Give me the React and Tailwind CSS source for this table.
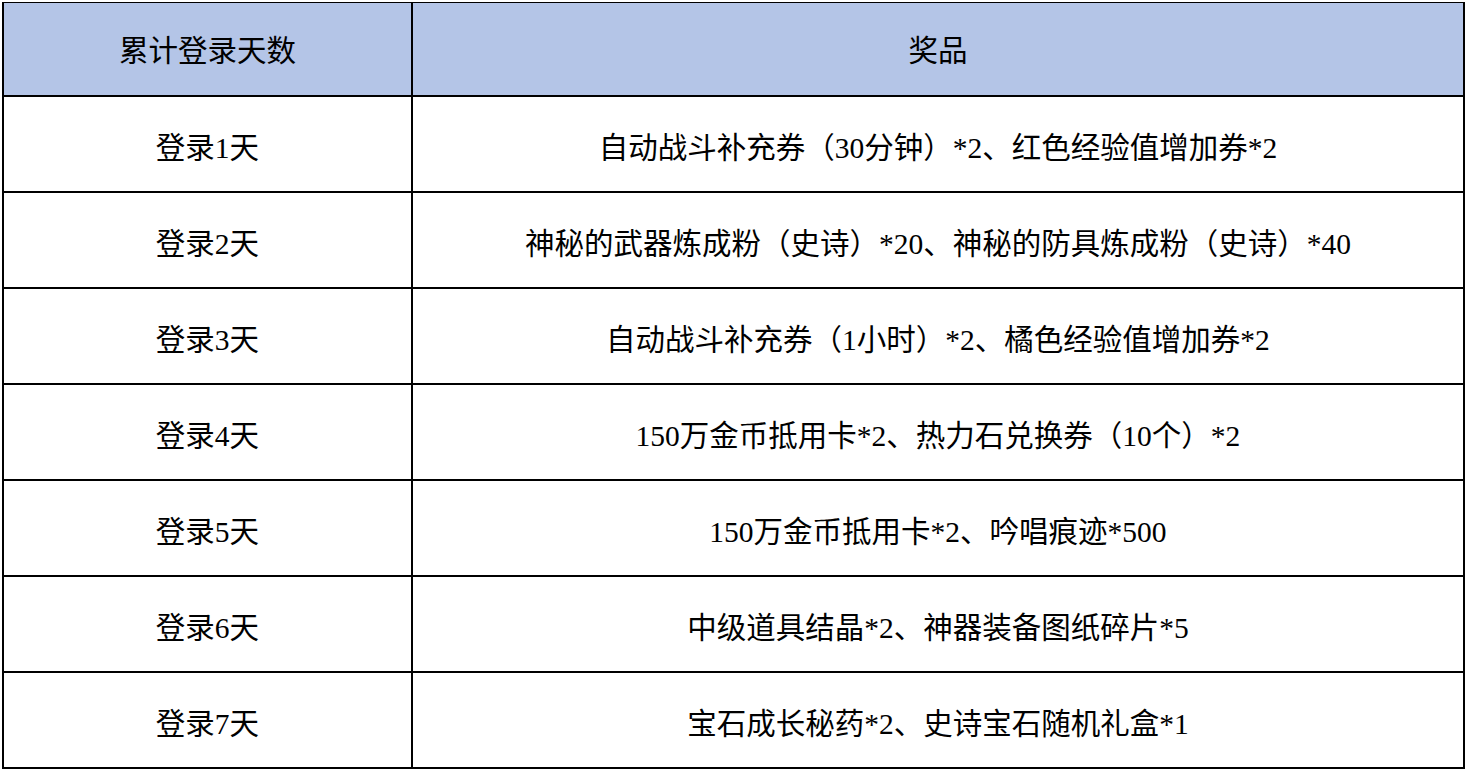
import React from "react";

const rows = [
  ["登录1天", "自动战斗补充券（30分钟）*2、红色经验值增加券*2"],
  ["登录2天", "神秘的武器炼成粉（史诗）*20、神秘的防具炼成粉（史诗）*40"],
  ["登录3天", "自动战斗补充券（1小时）*2、橘色经验值增加券*2"],
  ["登录4天", "150万金币抵用卡*2、热力石兑换券（10个）*2"],
  ["登录5天", "150万金币抵用卡*2、吟唱痕迹*500"],
  ["登录6天", "中级道具结晶*2、神器装备图纸碎片*5"],
  ["登录7天", "宝石成长秘药*2、史诗宝石随机礼盒*1"],
];

export default function App() {
  return (
    <div className="w-[1466px] h-[770px] bg-white pt-[2px] pl-[2px] font-['Liberation_Serif','Noto_Sans_CJK_SC',serif] text-black text-[29.5px]">
      <div className="w-[1463px] border-t border-l-2 border-r-2 border-black">
        {/* 表头 */}
        <div className="grid grid-cols-[409px_1fr] h-[94px] border-b-2 border-black bg-[#b4c5e7]">
          <div className="flex items-center justify-center border-r-2 border-black pt-[4px]">累计登录天数</div>
          <div className="flex items-center justify-center pt-[4px]">奖品</div>
        </div>

        {rows.map(([day, prize]) => (
          <div key={day} className="grid grid-cols-[409px_1fr] h-[96px] border-b-2 border-black">
            <div className="flex items-center justify-center border-r-2 border-black pt-[8px]">{day}</div>
            <div className="flex items-center justify-center pt-[8px]">{prize}</div>
          </div>
        ))}
      </div>
    </div>
  );
}
